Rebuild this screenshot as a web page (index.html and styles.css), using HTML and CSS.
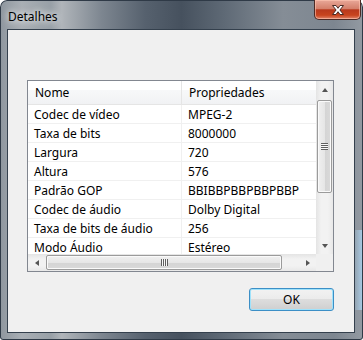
FILE: index.html
```html
<!DOCTYPE html>
<html lang="pt">

<head>
    <meta charset="UTF-8">
    <title>Detalhes</title>
    <link rel="stylesheet" href="styles.css">
</head>

<body>
    <div class="window">
        <div class="titlebar">
            <span class="title">Detalhes</span>
            <div class="close">
                <svg width="16" height="12" viewBox="0 0 16 12">
                    <path d="M2.5 1.5 H6 L8 4.3 L10 1.5 H13.5 L9.9 6 L13.5 10.5 H10 L8 7.7 L6 10.5 H2.5 L6.1 6 Z"
                        fill="#fff" stroke="#4a2a24" stroke-width="1" stroke-linejoin="round" />
                </svg>
            </div>
        </div>
        <div class="client">
            <div class="listview">
                <div class="view">
                    <div class="header">
                        <div class="cell">Nome</div>
                        <div class="cell">Propriedades</div>
                    </div>
                    <div class="row"><div class="cell">Codec de vídeo</div><div class="cell">MPEG-2</div></div>
                    <div class="row"><div class="cell">Taxa de bits</div><div class="cell">8000000</div></div>
                    <div class="row"><div class="cell">Largura</div><div class="cell">720</div></div>
                    <div class="row"><div class="cell">Altura</div><div class="cell">576</div></div>
                    <div class="row"><div class="cell">Padrão GOP</div><div class="cell">BBIBBPBBPBBPBBP</div></div>
                    <div class="row"><div class="cell">Codec de áudio</div><div class="cell">Dolby Digital</div></div>
                    <div class="row"><div class="cell">Taxa de bits de áudio</div><div class="cell">256</div></div>
                    <div class="row"><div class="cell">Modo Áudio</div><div class="cell">Estéreo</div></div>
                </div>
                <div class="vscroll">
                    <div class="arrow"><span class="tri up"></span></div>
                    <div class="track">
                        <div class="thumb"><span class="grip"></span></div>
                    </div>
                    <div class="arrow"><span class="tri down"></span></div>
                </div>
                <div class="hscroll">
                    <div class="arrow"><span class="tri left"></span></div>
                    <div class="track">
                        <div class="thumb"><span class="grip"></span></div>
                    </div>
                    <div class="arrow"><span class="tri right"></span></div>
                </div>
                <div class="corner"></div>
            </div>
            <div class="actions">
                <button class="ok">OK</button>
            </div>
        </div>
    </div>
</body>

</html>
```

FILE: styles.css
```css
body {
    margin: 0;
    background: #fff;
    font-family: "Segoe UI", "Noto Sans", sans-serif;
    font-size: 12px;
}

.window {
    width: 363px;
    height: 340px;
    box-sizing: border-box;
    padding: 0 8px 7px 7px;
    border-radius: 7px 7px 3px 3px;
    display: flex;
    flex-direction: column;
    background:
        linear-gradient(90deg, rgba(210, 230, 250, 0) 0%, rgba(210, 230, 250, 0) 97%, rgba(170, 210, 240, 0.9) 100%) 0 230px / 100% 80px no-repeat,
        linear-gradient(90deg, #8e969e 0%, #a9afb5 6%, #98a0a7 14%, #b0b5ba 17%, #7d8690 28%, #56616e 40%, #46515e 50%, #5f6a76 62%, #858d96 78%, #7d8690 92%, #939aa2 100%);
    box-shadow: inset 0 0 0 1px #2f3a47;
}

.titlebar {
    height: 29px;
    display: flex;
    justify-content: space-between;
    align-items: flex-start;
}

.title {
    margin: 8px 0 0 1px;
    color: #000;
    text-shadow: 0 0 6px #fff, 0 0 10px rgba(255, 255, 255, 0.7);
}

.close {
    width: 47px;
    height: 20px;
    box-sizing: border-box;
    margin-right: -6px;
    border: 1px solid #4d2a25;
    border-top: none;
    border-radius: 0 0 5px 5px;
    background: linear-gradient(#e9a899 0%, #d4806b 45%, #b9391d 52%, #c8441e 80%, #e0846a 100%);
    box-shadow: inset 0 0 0 1px rgba(255, 200, 180, 0.6);
    display: flex;
    justify-content: center;
    align-items: center;
}

.client {
    flex: 1;
    background: #f0f0f0;
    border: 1px solid #34404d;
    padding: 50px 20px 0 19px;
}

.listview {
    width: 307px;
    height: 192px;
    box-sizing: border-box;
    border: 1px solid #828790;
    background: #fff;
    display: grid;
    grid-template-columns: 1fr 17px;
    grid-template-rows: 1fr 17px;
}

.view {
    overflow: hidden;
    color: #000;
}

.header,
.row {
    display: grid;
    grid-template-columns: 154px 240px;
}

.header {
    height: 24px;
    box-sizing: border-box;
    border-bottom: 1px solid #e5e5e5;
    background: linear-gradient(#ffffff 0%, #ffffff 40%, #f7f8f9 41%, #f1f2f4 100%);
}

.header .cell {
    line-height: 23px;
    padding-left: 7px;
    border-right: 1px solid #e5e5e5;
}

.row {
    height: 19px;
    box-sizing: border-box;
    border-bottom: 1px solid #f0f0f0;
}

.row .cell {
    line-height: 13px;
    padding: 3px 0 0 6px;
    border-right: 1px solid #f0f0f0;
    white-space: nowrap;
}

.vscroll,
.hscroll {
    display: flex;
    background: linear-gradient(90deg, #e4e4e4, #f2f2f2 30%, #f2f2f2 70%, #e8e8e8);
}

.vscroll {
    flex-direction: column;
}

.hscroll {
    background: linear-gradient(#e4e4e4, #f2f2f2 30%, #f2f2f2 70%, #e8e8e8);
}

.arrow {
    width: 17px;
    height: 17px;
    display: flex;
    justify-content: center;
    align-items: center;
}

.track {
    flex: 1;
    display: flex;
}

.vscroll .track {
    padding: 2px 1px 44px;
}

.hscroll .track {
    padding: 1px 17px 1px 1px;
}

.thumb {
    flex: 1;
    border: 1px solid #9b9b9b;
    border-radius: 2px;
    display: flex;
    justify-content: center;
    align-items: center;
}

.vscroll .thumb {
    background: linear-gradient(90deg, #f0f0f0, #e6e6e6 50%, #d4d4d4 51%, #d9d9d9);
    box-shadow: inset 0 0 0 1px #fafafa;
}

.hscroll .thumb {
    background: linear-gradient(#f0f0f0, #e6e6e6 50%, #d4d4d4 51%, #d9d9d9);
    box-shadow: inset 0 0 0 1px #fafafa;
}

.vscroll .grip {
    width: 7px;
    height: 7px;
    background: repeating-linear-gradient(#5f5f5f 0 1px, #f8f8f8 1px 2px);
}

.hscroll .grip {
    width: 7px;
    height: 7px;
    background: repeating-linear-gradient(90deg, #5f5f5f 0 1px, #f8f8f8 1px 2px);
}

.tri {
    width: 0;
    height: 0;
    border: 3.5px solid transparent;
}

.tri.up {
    border-top: none;
    border-bottom: 4px solid #555;
}

.tri.down {
    border-bottom: none;
    border-top: 4px solid #555;
}

.tri.left {
    border-left: none;
    border-right: 4px solid #555;
}

.tri.right {
    border-right: none;
    border-left: 4px solid #555;
}

.corner {
    background: #f0f0f0;
}

.actions {
    width: 307px;
    display: flex;
    justify-content: flex-end;
    margin-top: 16px;
}

.ok {
    width: 85px;
    height: 23px;
    border: 1px solid #3c8fc6;
    border-radius: 3px;
    background: linear-gradient(#f2f2f2 0%, #ebebeb 48%, #dddddd 50%, #cfcfcf 100%);
    box-shadow: inset 0 0 0 1px #9fe2fb;
    font-family: inherit;
    font-size: 12px;
    color: #000;
    padding: 0;
}
```
